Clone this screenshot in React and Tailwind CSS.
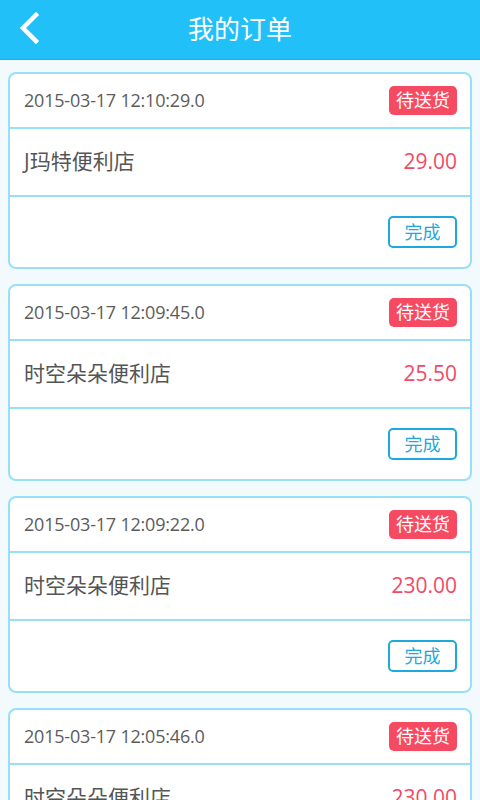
import React from 'react';

const orders = [
  { time: '2015-03-17 12:10:29.0', store: 'J玛特便利店', price: '29.00' },
  { time: '2015-03-17 12:09:45.0', store: '时空朵朵便利店', price: '25.50' },
  { time: '2015-03-17 12:09:22.0', store: '时空朵朵便利店', price: '230.00' },
  { time: '2015-03-17 12:05:46.0', store: '时空朵朵便利店', price: '230.00' },
];

function OrderCard({ order }) {
  return (
    <div className="mx-2 h-[197px] shrink-0 overflow-hidden rounded-[8px] border-2 border-[#98e0f6] bg-white">
      <div className="flex h-[55px] items-center justify-between border-b-2 border-[#98e0f6] pl-[14px] pr-[13px]">
        <span className="text-[18px] tracking-[-0.2px] text-[#5c5c5c]">{order.time}</span>
        <span className="flex h-[29px] w-[68px] items-center justify-center rounded-[5px] bg-[#f64a62] text-[18px] text-white">
          待送货
        </span>
      </div>
      <div className="flex h-[68px] items-center justify-between border-b-2 border-[#98e0f6] pl-[14px] pr-[13px]">
        <span className="text-[21px] text-[#555555]">{order.store}</span>
        <span className="text-[21px] text-[#f24a64]">{order.price}</span>
      </div>
      <div className="flex h-[70px] items-center justify-end pr-[13px]">
        <button className="flex h-[32px] w-[69px] items-center justify-center rounded-[5px] border-2 border-[#1ea9dc] text-[18px] text-[#1ea9dc]">
          完成
        </button>
      </div>
    </div>
  );
}

export default function App() {
  return (
    <div
      className="flex h-[800px] w-[480px] flex-col overflow-hidden bg-[#f3fafd]"
      style={{ fontFamily: '"Open Sans", "Noto Sans CJK SC", sans-serif' }}
    >
      <div className="relative flex h-[60px] shrink-0 items-center justify-center border-b border-[#1bb2e8] bg-[#21c0f9]">
        <svg className="absolute left-[18px] top-[12px]" width="24" height="34" viewBox="0 0 24 34">
          <path d="M18 3 L5 16 L18 29" fill="none" stroke="white" strokeWidth="4.5" strokeLinecap="square" />
        </svg>
        <span className="text-[26px] text-white">我的订单</span>
      </div>
      <div className="flex flex-col gap-[15px] pt-[12px]">
        {orders.map((o, i) => (
          <OrderCard key={i} order={o} />
        ))}
      </div>
    </div>
  );
}
